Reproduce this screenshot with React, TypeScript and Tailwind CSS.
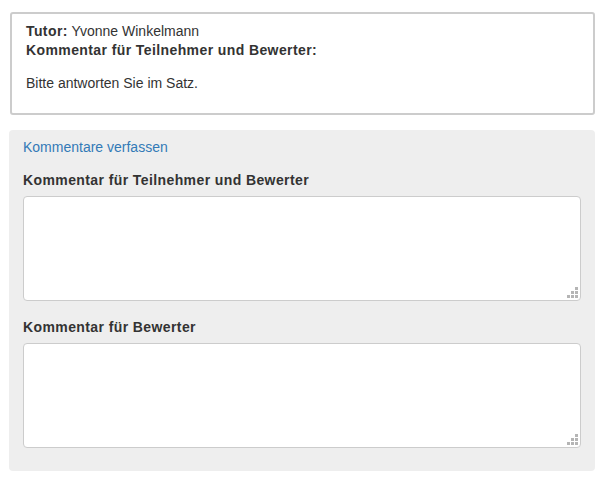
import React from 'react';

function Grip() {
  const cells = [
    [8, 0],
    [4, 4],
    [8, 4],
    [0, 8],
    [4, 8],
    [8, 8],
  ];
  return (
    <svg width="11" height="11" viewBox="0 0 11 11" className="absolute right-[3px] bottom-[3px] pointer-events-none">
      {cells.map(([x, y], i) => (
        <rect key={i} x={x} y={y} width="3" height="3" fill="#b5b5b5" />
      ))}
    </svg>
  );
}

function CommentField({ label }: { label: string }) {
  return (
    <div>
      <label className="block font-bold tracking-[0.4px] leading-5 mb-[6px]">{label}</label>
      <div className="relative">
        <textarea className="block w-full h-[105px] resize-none rounded-[4px] border border-[#ccc] bg-white outline-none" />
        <Grip />
      </div>
    </div>
  );
}

export default function App() {
  return (
    <div className="bg-white w-[604px] h-[481px] text-[14px] text-[#333] font-['Liberation_Sans',Arial,sans-serif]">
      <div className="pt-[12px] pl-[10px] pr-[9px]">
        <div className="border-2 border-[#ccc] rounded-[3px] pl-[14px] pr-[14px] pt-[8px] pb-[19px] leading-[19px] h-[103px]">
          <div>
            <b className="tracking-[0.4px]">Tutor:</b> Yvonne Winkelmann
          </div>
          <div className="font-bold tracking-[0.4px]">Kommentar für Teilnehmer und Bewerter:</div>
          <p className="mt-[14px]">Bitte antworten Sie im Satz.</p>
        </div>
      </div>
      <div className="mt-[15px] ml-[9px] mr-[9px] bg-[#eee] rounded-[4px] pl-[14px] pr-[14px] pt-[7px] pb-[23px]">
        <a className="block text-[#337ab7] leading-5">Kommentare verfassen</a>
        <div className="mt-[13px] flex flex-col gap-[16px]">
          <CommentField label="Kommentar für Teilnehmer und Bewerter" />
          <CommentField label="Kommentar für Bewerter" />
        </div>
      </div>
    </div>
  );
}
